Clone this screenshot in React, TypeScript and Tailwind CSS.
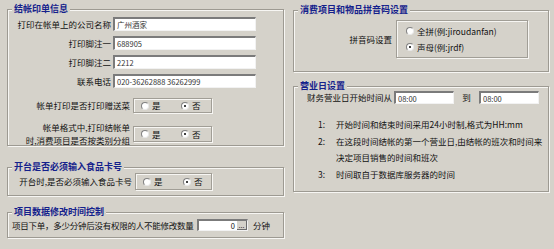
import React from "react"

const font = "font-['Noto_Sans_CJK_SC',sans-serif]"

function Group({
  title,
  className,
  children,
}: {
  title: string
  className: string
  children: React.ReactNode
}) {
  return (
    <div
      className={`relative border border-[#9d9a92] shadow-[inset_1px_1px_0_#f7f6f3,1px_1px_0_#f7f6f3] ${className}`}
    >
      <span className="absolute -top-[7px] left-[4px] bg-[#d5d2ca] px-[2px] text-[9px] leading-[12px] font-bold text-[#14218c]">
        {title}
      </span>
      {children}
    </div>
  )
}

function Field({ value, className }: { value: string; className: string }) {
  return (
    <div
      className={`flex items-center overflow-hidden whitespace-nowrap bg-white border-t-2 border-l-2 border-t-[#7b7b7b] border-l-[#7b7b7b] border-b border-r border-b-[#f2f2f2] border-r-[#f2f2f2] px-[2px] text-[7.5px] text-[#333] ${className}`}
    >
      {value}
    </div>
  )
}

function Radio({ checked }: { checked?: boolean }) {
  return (
    <span className="relative inline-block w-[8px] h-[8px] shrink-0 rounded-full bg-white border border-t-[#808080] border-l-[#808080] border-b-[#e8e8e8] border-r-[#e8e8e8]">
      {checked && (
        <span className="absolute left-[2px] top-[2px] w-[2px] h-[2px] rounded-full bg-black" />
      )}
    </span>
  )
}

function YesNo({ className }: { className: string }) {
  return (
    <div
      className={`flex items-center border border-[#a19e96] shadow-[inset_1px_1px_0_#f7f6f3,1px_1px_0_#f7f6f3] pl-[7px] ${className}`}
    >
      <Radio />
      <span className="ml-[3px] w-[29px]">是</span>
      <Radio checked />
      <span className="ml-[3px]">否</span>
    </div>
  )
}

export default function App() {
  return (
    <div
      className={`flex w-[554px] h-[249px] bg-[#d5d2ca] text-[8.5px] leading-[11px] text-[#111] ${font}`}
    >
      {/* left column */}
      <div className="ml-[7px] flex w-[277px] flex-col">
        <Group title="结帐印单信息" className="mt-[9px] h-[137px] pt-[7px]">
          <div className="flex flex-col gap-[5px]">
            {[
              ["打印在帐单上的公司名称", "广州酒家"],
              ["打印脚注一", "688905"],
              ["打印脚注二", "2212"],
              ["联系电话", "020-36262888 36262999"],
            ].map(([label, value]) => (
              <div key={label} className="flex items-center">
                <span className="w-[105px] pr-[2px] text-right whitespace-nowrap">{label}</span>
                <Field value={value} className="w-[143px] h-[14px]" />
              </div>
            ))}
          </div>
          <div className="mt-[10px] flex items-center">
            <span className="w-[122px] text-right whitespace-nowrap">帐单打印是否打印赠送菜</span>
            <YesNo className="ml-[3px] w-[79px] h-[15px]" />
          </div>
          <div className="mt-[8px] flex items-center">
            <span className="w-[122px] text-right leading-[13px] whitespace-nowrap">
              帐单格式中,打印结帐单
              <br />
              时,消费项目是否按类别分组
            </span>
            <YesNo className="ml-[3px] w-[79px] h-[16px]" />
          </div>
        </Group>

        <Group title="开台是否必须输入食品卡号" className="mt-[21px] h-[29px] pt-[5px]">
          <div className="flex items-center">
            <span className="w-[124px] text-right whitespace-nowrap">开台时,是否必须输入食品卡号</span>
            <YesNo className="ml-[3px] w-[77px] h-[17px]" />
          </div>
        </Group>

        <Group title="项目数据修改时间控制" className="mt-[16px] h-[26px] pt-[6px]">
          <div className="flex items-center pl-[4px]">
            <span className="w-[185px] whitespace-nowrap tracking-[-0.25px]">
              项目下单，多少分钟后没有权限的人不能修改数量
            </span>
            <div className="flex h-[12px] w-[51px] items-stretch bg-white border-t-2 border-l-2 border-t-[#7b7b7b] border-l-[#7b7b7b] border-b border-r border-b-[#f2f2f2] border-r-[#f2f2f2]">
              <span className="flex-1 pr-[2px] text-right text-[7.5px] leading-[10px]">0</span>
              <span className="flex w-[10px] items-center justify-center bg-[#d5d2ca] border-r border-b border-[#6b6b6b] text-[7px] leading-[8px]">
                ...
              </span>
            </div>
            <span className="ml-[5px]">分钟</span>
          </div>
        </Group>
      </div>

      {/* right column */}
      <div className="ml-[9px] flex w-[256px] flex-col">
        <Group title="消费项目和物品拼音码设置" className="mt-[10px] h-[62px] pt-[9px]">
          <div className="flex items-center">
            <span className="w-[100px] pr-[2px] text-right">拼音码设置</span>
            <div className="ml-[2px] flex h-[38px] w-[132px] flex-col justify-center gap-[5px] border border-[#a19e96] shadow-[inset_1px_1px_0_#f7f6f3,1px_1px_0_#f7f6f3] pl-[9px]">
              <div className="flex items-center">
                <Radio />
                <span className="ml-[3px]">全拼(例:jiroudanfan)</span>
              </div>
              <div className="flex items-center">
                <Radio checked />
                <span className="ml-[3px]">声母(例:jrdf)</span>
              </div>
            </div>
          </div>
        </Group>

        <Group title="营业日设置" className="mt-[14px] h-[106px] pt-[4px]">
          <div className="flex items-center pl-[13px]">
            <span className="w-[87px] whitespace-nowrap">财务营业日开始时间从</span>
            <Field value="08:00" className="w-[60px] h-[13px]" />
            <span className="w-[25px] text-center">到</span>
            <Field value="08:00" className="w-[60px] h-[13px]" />
          </div>
          <div className="mt-[12px] flex flex-col pl-[24px] leading-[16.5px]">
            <div className="flex">
              <span className="w-[18px]">1:</span>
              <span>开始时间和结束时间采用24小时制,格式为HH:mm</span>
            </div>
            <div className="flex">
              <span className="w-[18px]">2:</span>
              <span className="whitespace-nowrap">
                在这段时间结帐的第一个营业日,由结帐的班次和时间来
                <br />
                决定项目销售的时间和班次
              </span>
            </div>
            <div className="flex">
              <span className="w-[18px]">3:</span>
              <span>时间取自于数据库服务器的时间</span>
            </div>
          </div>
        </Group>
      </div>
    </div>
  )
}
